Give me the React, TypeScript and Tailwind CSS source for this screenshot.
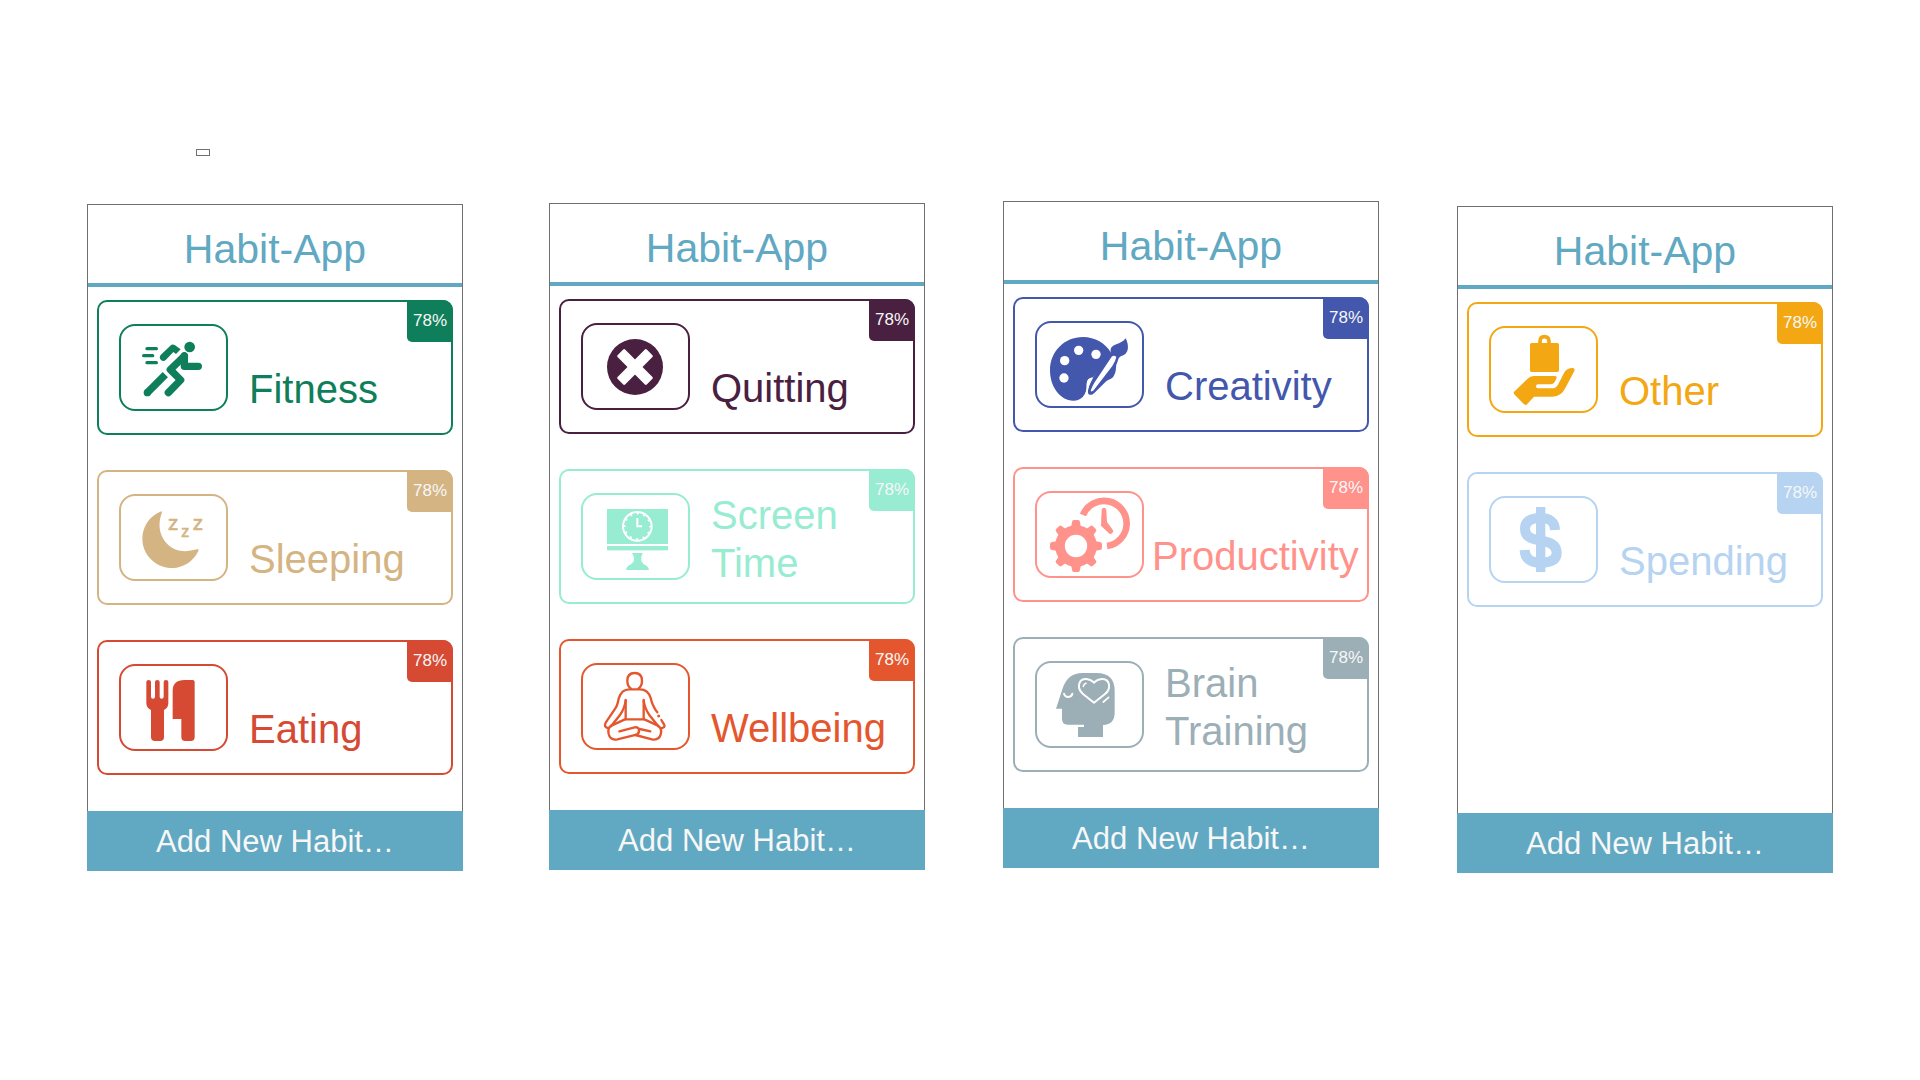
import type { ReactNode } from "react";
import { clsx } from "clsx";

type Habit = {
  name: string;
  border: string;
  text: string;
  fill: string;
  icon: ReactNode;
  twoLines?: boolean;
  tight?: boolean;
};

function Icon({ box, children }: { box: string; children: ReactNode }) {
  return (
    <svg viewBox={box} className="h-full w-full" fill="currentColor" aria-hidden="true">
      {children}
    </svg>
  );
}

const runner = (
  <Icon box="123 558 315 249">
    <circle cx="329" cy="621" r="16" />
    <path
      d="M201 626H229M191 647H218M201 668H229"
      fill="none"
      stroke="currentColor"
      strokeWidth="10"
      strokeLinecap="round"
    />
    <path d="M242 645L271 617Q277 611 284 615L302 628L288 642L280 636L258 659Q250 666 243 660Q236 652 242 645Z" />
    <g fill="none" stroke="currentColor" strokeWidth="22" strokeLinejoin="round">
      <path d="M313 648L271 689L302 720L265 758" strokeLinecap="round" />
      <path d="M313 648V679H355" strokeLinecap="round" />
      <path d="M202 758L256 704" />
    </g>
    <circle cx="202" cy="758" r="11" />
  </Icon>
);

const moon = (
  <Icon box="123 108 315 249">
    <path d="M241 155Q247 151 246 157C230 200 242 232 262 252C285 275 315 278 350 268Q358 266 355 273A88 88 0 1 1 241 155Z" />
    <g
      fontFamily="Liberation Sans, sans-serif"
      stroke="currentColor"
      strokeWidth="2"
    >
      <text x="264" y="211" fontSize="62">z</text>
      <text x="304" y="230" fontSize="48">z</text>
      <text x="338" y="209" fontSize="62">z</text>
    </g>
  </Icon>
);

const cutlery = (
  <Icon box="123 618 315 249">
    <path d="M199 666q0-6 7-6t7 6V710q0 6 6 6t6-6V666q0-6 7-6t7 6V710q0 6 6 6t6-6V666q0-6 7-6t7 6V730q0 14-13 20V831q0 12-12 12h-15q-12 0-12-12V750q-14-6-14-20Z" />
    <path d="M278 692q0-32 36-32h24q6 0 6 6V831q0 12-12 12h-16q-12 0-12-12V777H278Z" />
  </Icon>
);

const cross = (
  <Icon box="129 405 315 249">
    <circle cx="285" cy="531" r="84" />
    <g fill="white">
      <rect x="223" y="515" width="124" height="32" rx="4" transform="rotate(45 285 531)" />
      <rect x="223" y="515" width="124" height="32" rx="4" transform="rotate(-45 285 531)" />
    </g>
  </Icon>
);

const monitor = (
  <Icon box="129 105 315 249">
    <rect x="201" y="147" width="183" height="105" />
    <rect x="201" y="258" width="183" height="13" />
    <path d="M276 279H308Q298 302 311 313Q325 318 327 330H258Q260 318 273 313Q290 302 276 279Z" />
    <g fill="none" stroke="white">
      <circle cx="292" cy="199" r="43" strokeWidth="6" />
      <circle cx="292" cy="199" r="38" strokeWidth="5" strokeDasharray="6 13.9" strokeDashoffset="3" />
      <path d="M292 174V199H306" strokeWidth="6" />
    </g>
  </Icon>
);

const lotus = (
  <Icon box="129 615 315 249">
    <g fill="none" stroke="currentColor" strokeWidth="7" strokeLinecap="round" strokeLinejoin="round">
      <path d="M273 686Q262 678 262 662Q262 639 284 639Q306 639 306 662Q306 678 295 686" />
      <path d="M206 805Q190 802 197 788L224 748Q232 738 236 716Q244 688 268 688H300Q324 688 332 714Q338 740 352 757" />
      <path d="M364 780L372 793Q378 803 362 805" />
      <path d="M257 720V778H311V720" />
      <path d="M257 722Q254 745 240 765L213 799" />
      <path d="M311 722Q314 745 328 765L355 799" />
      <path d="M255 778L214 797Q202 803 206 822Q211 842 232 838L290 824Q298 820 297 810Q296 800 284 802L238 814" />
      <path d="M313 778L354 797Q367 804 362 824Q356 842 336 838L286 825" />
      <path d="M299 807L331 814" />
    </g>
    <circle cx="356" cy="768" r="4.5" />
  </Icon>
);

const palette = (
  <Icon box="126 399 315 249">
    <path d="M264 441C300 441 332 460 347 487L345 497L294 562C274 564 276 578 275 590C274 615 258 632 235 632C195 632 165 590 165 541C165 485 208 441 264 441Z" />
    <path d="M347 486C345 458 375 468 392 445C402 465 404 492 378 499C368 503 370 514 364 524C362 534 365 544 355 560C350 568 340 567 332 575L298 609C290 617 280 616 279 608C278 592 288 570 300 553L340 497Z" />
    <g fill="white">
      <path d="M350 500Q357 494 364 501Q362 512 352 528L296 601Q292 605 288 604Q286 602 289 597Q292 588 298 578Z" />
      <path d="M294 564Q286 578 282 589Q278 600 278 610L271 612Q277 598 275 582Q275 564 294 564Z" />
      <circle cx="251" cy="481" r="14" />
      <circle cx="303" cy="493" r="14" />
      <circle cx="209" cy="512" r="14" />
      <circle cx="207" cy="564" r="14" />
    </g>
  </Icon>
);

const gearClock = (
  <Icon box="126 99 315 249">
    <circle cx="243" cy="258" r="48" fill="none" stroke="currentColor" strokeWidth="29" />
    {[0, 45, 90, 135, 180, 225, 270, 315].map((angle) => (
      <path
        key={angle}
        d="M228 203L231 187Q231 180 237 180H249Q255 180 255 187L258 203Z"
        transform={`rotate(${angle} 243 258)`}
      />
    ))}
    <path d="M264 165A68 68 0 1 1 336 258" fill="none" stroke="currentColor" strokeWidth="20" />
    <path d="M320 151Q321 143 327 143Q333 143 334 151L336 186L353 209Q357 216 351 220Q346 224 341 219L318 197Z" />
  </Icon>
);

const headHeart = (
  <Icon box="126 609 315 249">
    <path d="M262 639H305Q359 639 359 693V758Q359 793 324 795V831H249V801H267V794H218Q201 794 201 777V746H183L204 682Q220 639 262 639Z" />
    <g fill="none" stroke="white" strokeWidth="6" strokeLinecap="round">
      <path d="M207 701Q209 711 220 711Q231 710 232 701" />
      <path d="M297 728L264 702C244 684 250 656 274 657Q288 658 297 668Q306 658 320 657C345 656 350 686 330 702Z" strokeLinejoin="round" />
      <path d="M265 679Q267 672 273 670" strokeWidth="5" />
      <path d="M325 726L341 712" strokeWidth="5" />
    </g>
  </Icon>
);

const handBag = (
  <Icon box="123 414 315 249">
    <rect x="240" y="459" width="87" height="87" rx="5" />
    <path d="M270 462V454Q270 440 283 440Q297 440 297 454V462" fill="none" stroke="currentColor" strokeWidth="11" />
    <path d="M191 607L232 567Q240 558 252 558H314Q322 558 319 566L314 576Q310 583 302 583H264Q258 583 258 589Q258 595 264 595H306Q318 595 324 584L342 549Q350 534 368 534Q376 535 373 543L346 594Q334 619 308 620H252L229 645Q226 646 222 643L192 612Z" />
  </Icon>
);

const dollar = (
  <Icon box="126 924 315 249">
    <rect x="261" y="951" width="28" height="195" />
    <path
      d="M318 1020Q317 984 274 984Q228 984 228 1016Q228 1041 258 1048L290 1055Q323 1063 323 1089Q323 1118 275 1118Q228 1118 227 1080"
      fill="none"
      stroke="currentColor"
      strokeWidth="30"
    />
  </Icon>
);

const screens: { offset: string; habits: Habit[] }[] = [
  {
    offset: "mt-[3px] mr-2",
    habits: [
      { name: "Fitness", border: "border-[#0e7f5a]", text: "text-[#0e7f5a]", fill: "bg-[#0e7f5a]", icon: runner },
      { name: "Sleeping", border: "border-[#d4b483]", text: "text-[#d4b483]", fill: "bg-[#d4b483]", icon: moon },
      { name: "Eating", border: "border-[#d64933]", text: "text-[#d64933]", fill: "bg-[#d64933]", icon: cutlery },
    ],
  },
  {
    offset: "mt-[2px]",
    habits: [
      { name: "Quitting", border: "border-[#4a2040]", text: "text-[#4a2040]", fill: "bg-[#4a2040]", icon: cross },
      { name: "Screen Time", border: "border-[#97ecd2]", text: "text-[#97ecd2]", fill: "bg-[#97ecd2]", icon: monitor, twoLines: true },
      { name: "Wellbeing", border: "border-[#e4572e]", text: "text-[#e4572e]", fill: "bg-[#e4572e]", icon: lotus },
    ],
  },
  {
    offset: "mt-0",
    habits: [
      { name: "Creativity", border: "border-[#4357ad]", text: "text-[#4357ad]", fill: "bg-[#4357ad]", icon: palette },
      { name: "Productivity", border: "border-[#ff928b]", text: "text-[#ff928b]", fill: "bg-[#ff928b]", icon: gearClock, tight: true },
      { name: "Brain Training", border: "border-[#9cafb7]", text: "text-[#9cafb7]", fill: "bg-[#9cafb7]", icon: headHeart, twoLines: true },
    ],
  },
  {
    offset: "mt-[5px]",
    habits: [
      { name: "Other", border: "border-[#f3a712]", text: "text-[#f3a712]", fill: "bg-[#f3a712]", icon: handBag },
      { name: "Spending", border: "border-[#b6d3f2]", text: "text-[#b6d3f2]", fill: "bg-[#b6d3f2]", icon: dollar },
    ],
  },
];

function HabitCard({ habit }: { habit: Habit }) {
  return (
    <button
      type="button"
      className={clsx(
        "relative flex h-[135px] w-full items-center rounded-[10px] border-2 pl-5 text-left",
        habit.border,
        habit.text,
      )}
    >
      <span className={clsx("block h-[87px] w-[109px] shrink-0 rounded-2xl border-2", habit.border)}>
        {habit.icon}
      </span>
      <span
        className={clsx(
          "min-w-0 flex-1 self-end text-[40px] leading-[48px]",
          habit.twoLines ? "pb-[15px]" : "pb-5",
          habit.tight ? "pl-2" : "pl-[21px]",
        )}
      >
        {habit.name}
      </span>
      <span
        className={clsx(
          "absolute -top-0.5 -right-0.5 flex h-[42px] w-[46px] items-center justify-center rounded-tr-[10px] rounded-bl-[5px] text-[17px] text-[#f7f7f7]",
          habit.fill,
        )}
      >
        78%
      </span>
    </button>
  );
}

function Screen({ offset, habits }: { offset: string; habits: Habit[] }) {
  return (
    <section className={clsx("min-w-0 flex-1", offset)}>
      <div className="border-x border-t border-[#707070]">
        <h2 className="border-b-4 border-[#61a8c2] pt-5 pb-2.5 text-center text-[41px] leading-[48px] text-[#61a8c2]">
          Habit-App
        </h2>
        <ul className="flex min-h-[524px] flex-col gap-[35px] px-[9px] pt-[13px] pb-9">
          {habits.map((habit) => (
            <li key={habit.name}>
              <HabitCard habit={habit} />
            </li>
          ))}
        </ul>
      </div>
      <button
        type="button"
        className="flex h-[60px] w-full items-center justify-center bg-[#61a8c2] pt-[3px] text-[31px] text-[#f7f7f7]"
      >
        Add New Habit…
      </button>
    </section>
  );
}

export default function App() {
  return (
    <main className="min-h-screen bg-white px-[87px] pt-[149px] font-['Liberation_Sans',Arial,sans-serif]">
      <div className="mb-[45px] ml-[109px] h-[7px] w-[14px] border border-[#707070]" />
      <div className="flex items-start gap-[78px]">
        {screens.map((screen) => (
          <Screen key={screen.habits[0].name} {...screen} />
        ))}
      </div>
    </main>
  );
}
